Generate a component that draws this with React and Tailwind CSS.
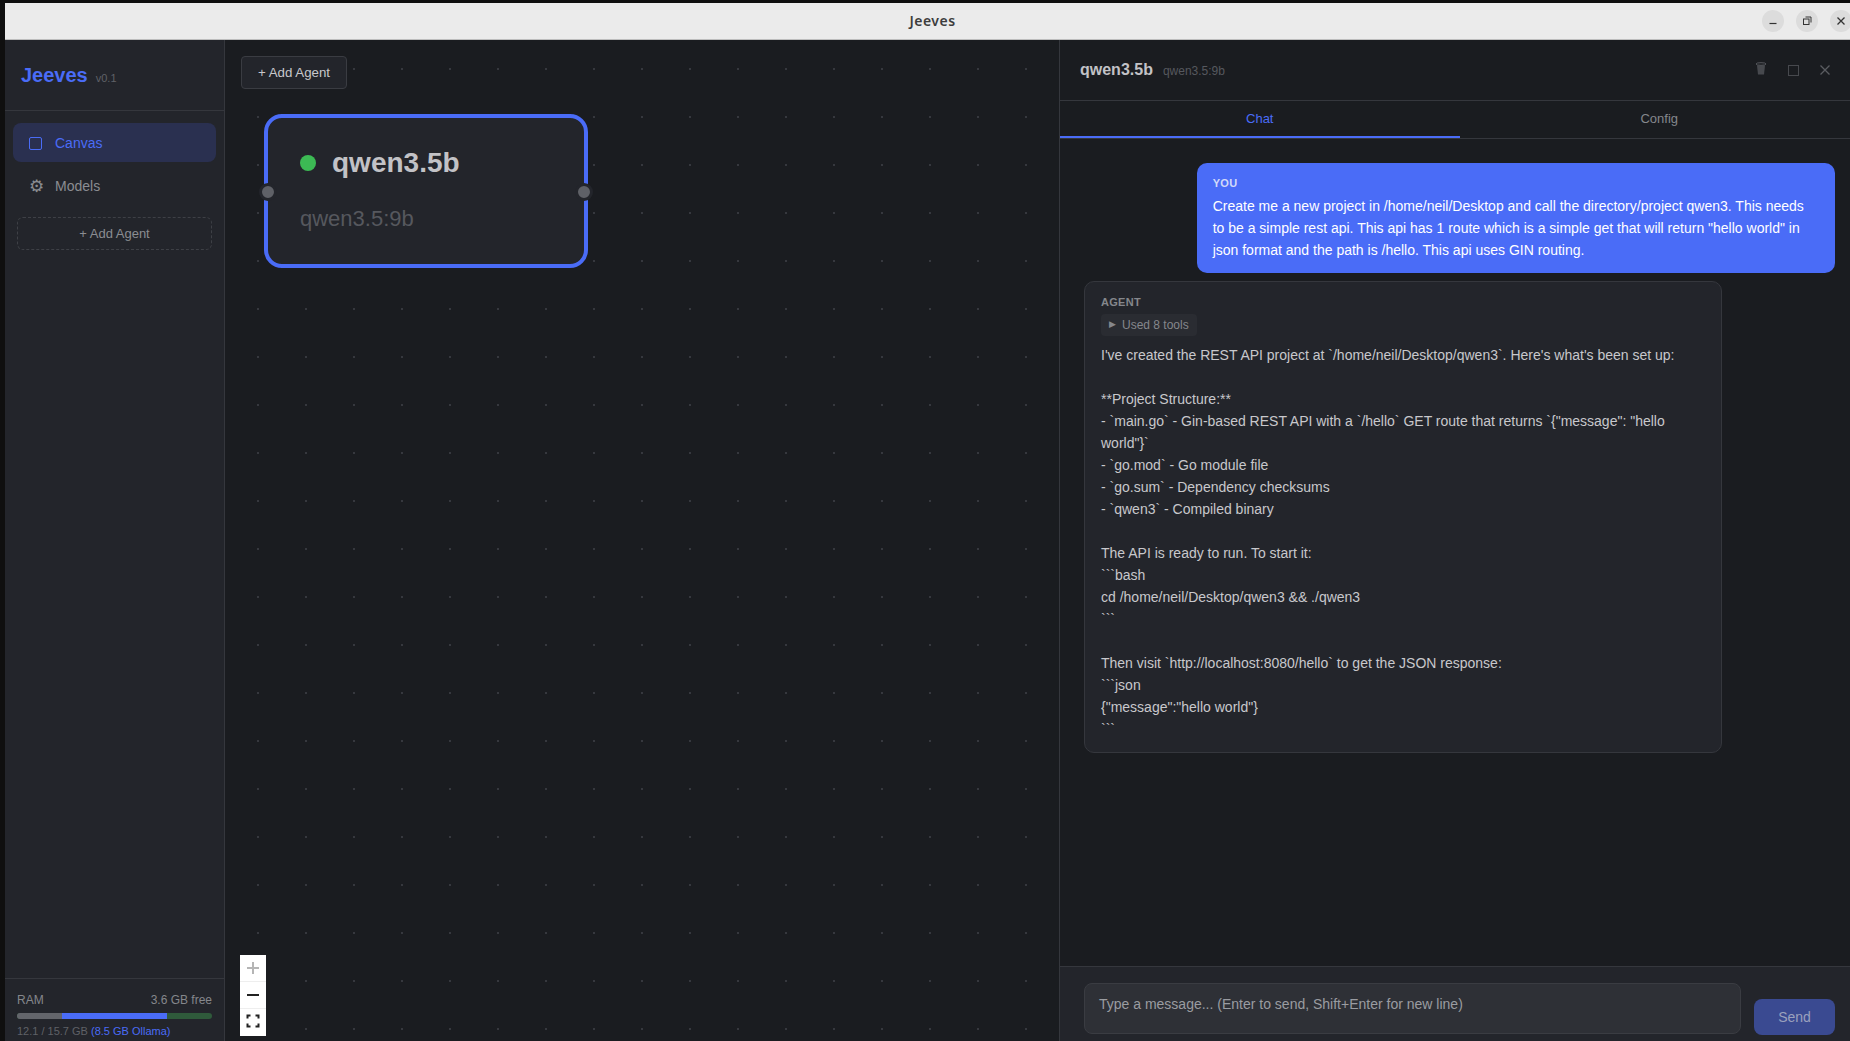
import React from "react";

const agentText = [
  "I've created the REST API project at `/home/neil/Desktop/qwen3`. Here's what's been set up:",
  "",
  "**Project Structure:**",
  '- `main.go` - Gin-based REST API with a `/hello` GET route that returns `{"message": "hello world"}`',
  "- `go.mod` - Go module file",
  "- `go.sum` - Dependency checksums",
  "- `qwen3` - Compiled binary",
  "",
  "The API is ready to run. To start it:",
  "```bash",
  "cd /home/neil/Desktop/qwen3 && ./qwen3",
  "```",
  "",
  "Then visit `http://localhost:8080/hello` to get the JSON response:",
  "```json",
  '{"message":"hello world"}',
  "```",
].join("\n");

function WinBtn({ children }) {
  return (
    <div className="flex h-[22px] w-[22px] shrink-0 items-center justify-center rounded-full bg-[#dcdcdc]">
      {children}
    </div>
  );
}

function TitleBar() {
  return (
    <div className="relative flex h-[37px] shrink-0 items-center justify-center border-b border-[#bdbdbd] bg-[#ebebeb] pb-[2px]">
      <span className="ml-[1px] text-[14px] font-semibold tracking-[0.5px] text-[#3d3d3d] [font-family:'Noto_Sans',sans-serif]">Jeeves</span>
      <div className="absolute right-[7px] top-[7px] flex gap-[12px]">
        <WinBtn>
          <svg width="10" height="10" viewBox="0 0 10 10"><path d="M1.5 7.5h7" stroke="#333" strokeWidth="1.2" /></svg>
        </WinBtn>
        <WinBtn>
          <svg width="10" height="10" viewBox="0 0 10 10" fill="none" stroke="#333" strokeWidth="1"><rect x="1.5" y="3" width="5.5" height="5.5" /><path d="M3.5 1h5.5v5.5" /></svg>
        </WinBtn>
        <WinBtn>
          <svg width="10" height="10" viewBox="0 0 10 10"><path d="M1.5 1.5l7 7M8.5 1.5l-7 7" stroke="#333" strokeWidth="1.3" /></svg>
        </WinBtn>
      </div>
    </div>
  );
}

function Sidebar() {
  return (
    <aside className="flex w-[220px] shrink-0 flex-col border-r border-[#35373d] bg-[#23252b]">
      <div className="flex h-[71px] shrink-0 items-baseline gap-[8px] border-b border-[#35373d] pl-[16px] pt-[23px]">
        <span className="text-[20px] font-bold leading-[24px] text-[#4a6cf7]">Jeeves</span>
        <span className="text-[11px] text-[#5f6167]">v0.1</span>
      </div>
      <nav className="flex flex-col gap-[4px] px-[8px] pt-[12px]">
        <div className="flex h-[39px] items-center gap-[13px] rounded-[8px] bg-[#2a3050] pl-[16px] pt-[2px] text-[14px] text-[#4a6cf7]">
          <span className="h-[13px] w-[13px] rounded-[2px] border border-[#4a6cf7]" />
          <span>Canvas</span>
        </div>
        <div className="flex h-[39px] items-center gap-[13px] rounded-[8px] pl-[16px] pt-[2px] text-[14px] text-[#8b8d92]">
          <span className="w-[13px] pr-[3px] text-center text-[17px] leading-none [font-family:'DejaVu_Sans',sans-serif]">⚙</span>
          <span>Models</span>
        </div>
        <div className="mx-[4px] mt-[8px] flex h-[33px] items-center justify-center rounded-[6px] border border-dashed border-[#3e4046] text-[13px] text-[#8b8d92]">
          + Add Agent
        </div>
      </nav>
      <div className="mt-auto h-[75px] shrink-0 border-t border-[#35373d] px-[12px] pt-[13px]">
        <div className="flex items-center justify-between text-[12px] leading-[16px] text-[#85878c]">
          <span>RAM</span>
          <span>3.6 GB free</span>
        </div>
        <div className="mt-[5px] flex h-[6px] overflow-hidden rounded-full bg-[#2f5a3b]">
          <div className="w-[45px] bg-[#63656b]" />
          <div className="w-[105px] bg-[#4a6cf7]" />
        </div>
        <div className="mt-[5px] text-[11px] leading-[14px] text-[#5f6167]">
          12.1 / 15.7 GB <span className="text-[#4a6cf7]">(8.5 GB Ollama)</span>
        </div>
      </div>
    </aside>
  );
}

function ZoomBtn({ children, last }) {
  return (
    <div className={`flex h-[27px] items-center justify-center ${last ? "pb-[3px]" : "border-b border-[#eeeeee]"}`}>
      {children}
    </div>
  );
}

function Canvas() {
  return (
    <main className="relative w-[834px] shrink-0 overflow-hidden bg-[#1a1c20] bg-[radial-gradient(circle,#36383e_1px,transparent_1.2px)] bg-[size:48px_48px] bg-[position:9px_5px]">
      <button className="absolute left-[16px] top-[16px] h-[33px] w-[106px] rounded-[4px] border border-[#3a3c42] bg-[#23252b] text-[13.3px] text-[#c8c8cc]">
        + Add Agent
      </button>
      <div className="absolute left-[39px] top-[74px] h-[154px] w-[324px] rounded-[18px] border-4 border-[#4a6cf7] bg-[#23252b] pl-[32px] pt-[29px]">
        <div className="flex h-[32px] items-center gap-[16px]">
          <span className="h-[16px] w-[16px] rounded-full bg-[#3cba54]" />
          <span className="text-[28px] font-bold leading-[32px] text-[#c2c2c6]">qwen3.5b</span>
        </div>
        <div className="mt-[27px] text-[22px] leading-[26px] text-[#56585e]">qwen3.5:9b</div>
        <span className="absolute -left-[9px] top-[65px] h-[18px] w-[18px] rounded-full border-[3px] border-[#23252b] bg-[#5f6167]" />
        <span className="absolute -right-[9px] top-[65px] h-[18px] w-[18px] rounded-full border-[3px] border-[#23252b] bg-[#5f6167]" />
      </div>
      <div className="absolute left-[15px] top-[915px] w-[26px] bg-white">
        <ZoomBtn>
          <svg width="14" height="14" viewBox="0 0 14 14"><path d="M7 1v12M1 7h12" stroke="#b5b5b5" strokeWidth="2" /></svg>
        </ZoomBtn>
        <ZoomBtn>
          <svg width="14" height="14" viewBox="0 0 14 14"><path d="M1 7h12" stroke="#222" strokeWidth="2" /></svg>
        </ZoomBtn>
        <ZoomBtn last>
          <svg width="14" height="14" viewBox="0 0 14 14" fill="none" stroke="#222" strokeWidth="2"><path d="M1.5 4.5V1.5h3M9.5 1.5h3v3M12.5 9.5v3h-3M4.5 12.5h-3v-3" /></svg>
        </ZoomBtn>
      </div>
    </main>
  );
}

function Panel() {
  return (
    <section className="flex min-w-0 flex-1 flex-col border-l border-[#35373d] bg-[#1a1c20]">
      <header className="flex h-[61px] shrink-0 items-center border-b border-[#35373d] pl-[20px] pr-[28px]">
        <span className="text-[16px] font-bold text-[#c2c2c6]">qwen3.5b</span>
        <span className="ml-[10px] mt-[1px] text-[12px] text-[#56585e]">qwen3.5:9b</span>
        <div className="ml-auto flex items-center gap-[20px]">
          <svg width="12" height="13" viewBox="0 0 12 13" className="-mt-[4px]">
            <path d="M2 3.5h8l-1 9h-6z" fill="#47494e" />
            <ellipse cx="6" cy="2" rx="5" ry="1.3" fill="none" stroke="#55575c" strokeWidth="1" />
          </svg>
          <span className="flex w-[12px] justify-center"><span className="h-[11px] w-[11px] border border-[#47494e]" /></span>
          <svg width="12" height="12" viewBox="0 0 12 12"><path d="M1.5 1.5l9 9M10.5 1.5l-9 9" stroke="#5a5c61" strokeWidth="1.3" /></svg>
        </div>
      </header>
      <div className="flex h-[38px] shrink-0 border-b border-[#35373d] text-[13px]">
        <div className="flex flex-1 items-center justify-center border-b-2 border-[#4a6cf7] text-[#4a6cf7]">Chat</div>
        <div className="flex flex-1 items-center justify-center pb-[2px] text-[#85878c]">Config</div>
      </div>
      <div className="flex min-h-0 flex-1 flex-col gap-[8px] overflow-hidden px-[24px] pt-[24px]">
        <div className="ml-auto w-full max-w-[85%] rounded-[10px] bg-[#4a6cf7] px-[16px] py-[12px] text-white">
          <div className="mb-[4px] text-[11px] font-bold leading-[16px] tracking-[0.3px] text-[#d2daf9]">YOU</div>
          <div className="text-[14px] leading-[22px]">
            Create me a new project in /home/neil/Desktop and call the directory/project qwen3. This needs to be a simple rest api. This api has 1 route which is a simple get that will return "hello world" in json format and the path is /hello. This api uses GIN routing.
          </div>
        </div>
        <div className="w-full max-w-[85%] rounded-[10px] border border-[#35373d] bg-[#23252b] px-[16px] py-[12px]">
          <div className="mb-[4px] text-[11px] font-bold leading-[16px] tracking-[0.3px] text-[#85878c]">AGENT</div>
          <div className="mb-[8px] flex h-[22px] w-[96px] items-center rounded-[4px] bg-[#2a2c32] pl-[8px] text-[12px] text-[#85878c]">
            <span className="w-[13px] text-[9px]">▶</span>Used 8 tools
          </div>
          <div className="whitespace-pre-wrap text-[14px] leading-[22px] text-[#c8c8cc]">{agentText}</div>
        </div>
      </div>
      <footer className="flex h-[87px] shrink-0 items-start gap-[13px] border-t border-[#35373d] bg-[#23252b] px-[24px] pt-[16px]">
        <div className="h-[51px] flex-1 rounded-[8px] border border-[#3a3c42] bg-[#2e3036] px-[14px] pt-[10px] text-[14px] leading-[20px] text-[#9a9ca1]">
          Type a message... (Enter to send, Shift+Enter for new line)
        </div>
        <button className="mt-[16px] h-[36px] w-[81px] rounded-[8px] bg-[#3a4a91] text-[14px] text-[#9aa1bd]">Send</button>
      </footer>
    </section>
  );
}

export default function App() {
  return (
    <div className="h-[1041px] w-[1850px] overflow-hidden bg-[#0f0f0f] pl-[5px] pt-[3px] [font-family:'Liberation_Sans',Arial,sans-serif]">
      <div className="flex h-[1050px] w-[1854px] flex-col">
        <TitleBar />
        <div className="flex min-h-0 flex-1">
          <Sidebar />
          <Canvas />
          <Panel />
        </div>
      </div>
    </div>
  );
}
